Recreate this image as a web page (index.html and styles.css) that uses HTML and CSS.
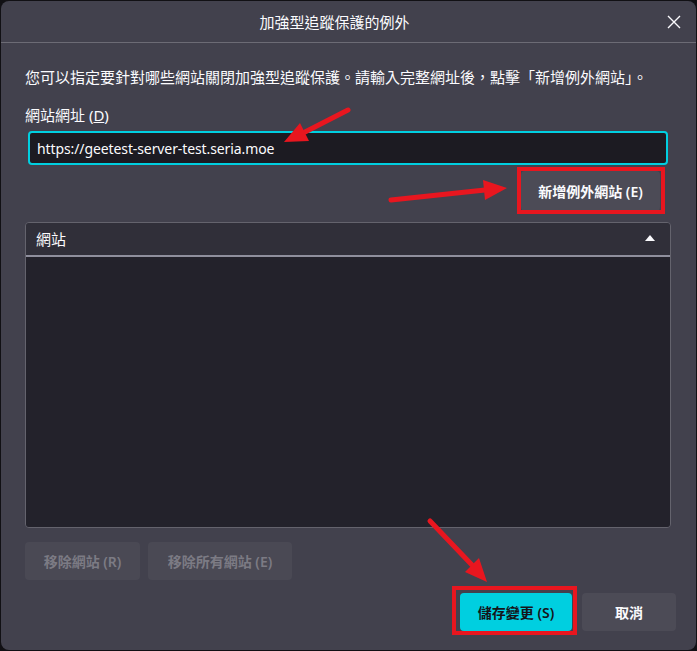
FILE: index.html
```html
<!DOCTYPE html>
<html lang="zh-Hant">

<head>
    <meta charset="UTF-8">
    <meta name="viewport" content="width=device-width, initial-scale=1.0">
    <title>加強型追蹤保護的例外</title>
    <link rel="stylesheet" href="styles.css">
</head>

<body>

    <div class="dialog">
        <div class="titlebar">
            <span class="title">加強型追蹤保護的例外</span>
            <button class="close" aria-label="關閉">
                <svg width="14" height="14" viewBox="0 0 14 14">
                    <path d="M1 1 L13 13 M13 1 L1 13" stroke="#fbfbfe" stroke-width="1.4" fill="none" />
                </svg>
            </button>
        </div>

        <div class="content">
            <p class="desc">您可以指定要針對哪些網站關閉加強型追蹤保護。請輸入完整網址後，點擊「新增例外網站」。</p>
            <label class="url-label" for="url">網站網址 (<u>D</u>)</label>
            <input class="url-input" type="text" id="url" value="https://geetest-server-test.seria.moe">

            <div class="add-row">
                <button class="btn">新增例外網站 (E)</button>
            </div>

            <div class="tree">
                <div class="tree-head">
                    <span>網站</span>
                    <span class="sort-arrow"></span>
                </div>
                <div class="tree-body"></div>
            </div>

            <div class="remove-row">
                <button class="btn btn-remove" disabled>移除網站 (R)</button>
                <button class="btn btn-remove-all" disabled>移除所有網站 (E)</button>
            </div>

            <div class="footer">
                <button class="btn btn-primary">儲存變更 (S)</button>
                <button class="btn btn-cancel">取消</button>
            </div>
        </div>
    </div>

    <!-- red annotations drawn on top of the screenshot -->
    <svg class="marks" width="697" height="651" viewBox="0 0 697 651">
        <g fill="none" stroke="#e8161f" stroke-width="4">
            <rect x="519" y="169" width="144" height="43" />
            <rect x="454" y="588" width="121" height="45" />
        </g>
        <g stroke="#e8161f" stroke-width="5" stroke-linecap="round">
            <line x1="348" y1="110" x2="305" y2="132" />
            <line x1="391" y1="200" x2="485" y2="190" />
            <line x1="430" y1="521" x2="472" y2="565" />
        </g>
        <g fill="#e8161f">
            <polygon points="284,142 309,141 300,123" />
            <polygon points="507,188 485,200 483,180" />
            <polygon points="487,582 465,572 479,558" />
        </g>
    </svg>

</body>

</html>
```

FILE: styles.css
```css
body {
    margin: 0;
    width: 697px;
    height: 651px;
    background-color: #111014;
    font-family: "Noto Sans", "Noto Sans CJK TC", sans-serif;
    color: #fbfbfe;
    position: relative;
    overflow: hidden;
}

.dialog {
    box-sizing: border-box;
    width: 695px;
    height: 649px;
    margin: 1px;
    background-color: #42414d;
    border-radius: 8px;
    display: flex;
    flex-direction: column;
}

.titlebar {
    height: 41px;
    border-bottom: 1px solid #6c6b75;
    display: flex;
    align-items: center;
    justify-content: center;
    position: relative;
    padding-right: 28px;
}

.title {
    font-size: 15px;
}

.close {
    position: absolute;
    right: 14px;
    top: 13px;
    width: 16px;
    height: 16px;
    padding: 0;
    border: none;
    background: none;
    display: flex;
    align-items: center;
    justify-content: center;
}

.content {
    padding: 0 25px 0 24px;
    display: flex;
    flex-direction: column;
}

.desc {
    margin: 24px 0 0;
    font-size: 15px;
    line-height: 20px;
}

.url-label {
    margin-top: 18px;
    font-size: 15px;
    line-height: 20px;
}

.url-input {
    box-sizing: border-box;
    margin: 6px 3px 0;
    height: 34px;
    padding: 0 7px;
    background-color: #1c1b22;
    color: #fbfbfe;
    border: 2px solid #00cfe0;
    border-radius: 4px;
    font-family: "Noto Sans", sans-serif;
    font-size: 14px;
    letter-spacing: -0.1px;
    outline: none;
}

.btn {
    font-family: "Noto Sans", "Noto Sans CJK TC", sans-serif;
    font-size: 14px;
    font-weight: 600;
    color: #fbfbfe;
    background-color: #4c4b56;
    border: none;
    border-radius: 4px;
    padding: 0;
}

.add-row {
    display: flex;
    justify-content: flex-end;
    margin-top: 6px;
    padding-right: 11px;
}

.add-row .btn {
    width: 139px;
    height: 40px;
}

.tree {
    margin-top: 11px;
    height: 306px;
    box-sizing: border-box;
    border: 1px solid #64636d;
    border-radius: 4px;
    display: flex;
    flex-direction: column;
    overflow: hidden;
}

.tree-head {
    height: 34px;
    background-color: #302f39;
    border-bottom: 2px solid #8f8f9d;
    display: flex;
    align-items: center;
    justify-content: space-between;
    padding: 0 15px 2px 10px;
    box-sizing: border-box;
    font-size: 15px;
}

.sort-arrow {
    width: 0;
    height: 0;
    border-left: 5px solid transparent;
    border-right: 5px solid transparent;
    border-bottom: 6px solid #fbfbfe;
}

.tree-body {
    flex: 1;
    background-color: #23222b;
}

.remove-row {
    display: flex;
    gap: 8px;
    margin-top: 14px;
}

.remove-row .btn {
    height: 38px;
    background-color: #4a4954;
    color: #7c7b84;
}

.btn-remove {
    width: 115px;
}

.btn-remove-all {
    width: 144px;
}

.footer {
    display: flex;
    justify-content: flex-end;
    gap: 10px;
    margin-top: 13px;
    margin-right: -5px;
}

.footer .btn {
    height: 38px;
}

.btn-primary {
    width: 112px;
    background-color: #00cfe0;
    color: #15141a;
}

.btn-cancel {
    width: 94px;
}

.marks {
    position: absolute;
    left: 0;
    top: 0;
    pointer-events: none;
}
```
